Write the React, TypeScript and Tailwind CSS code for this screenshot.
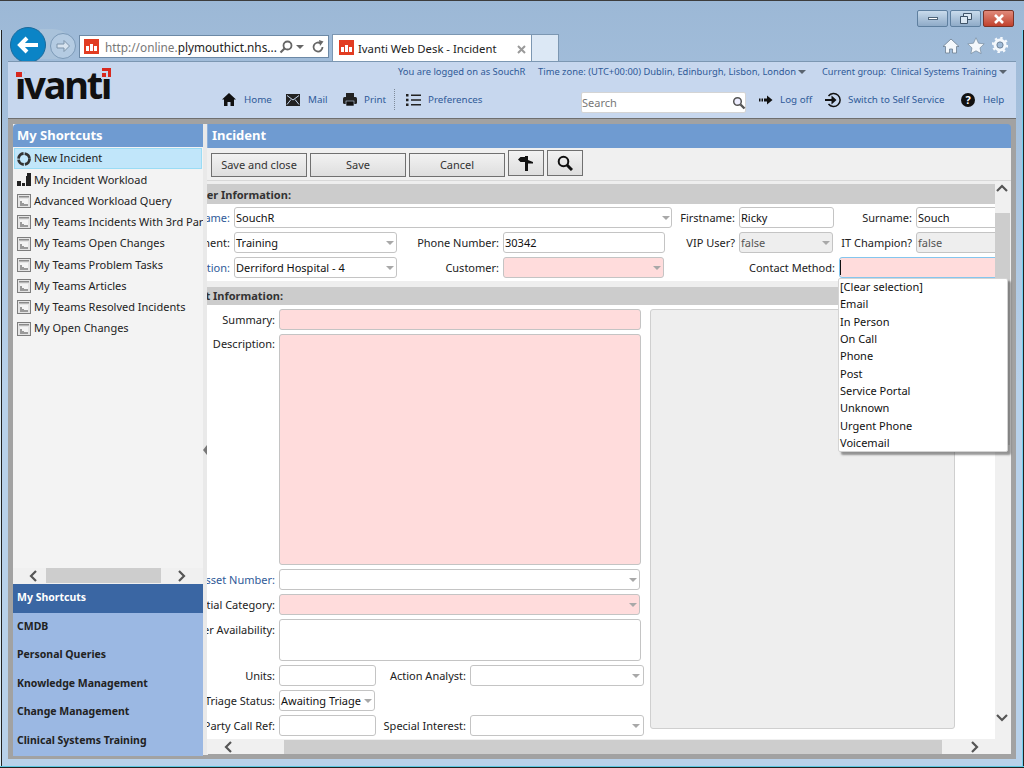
import React from "react";

type P = { className?: string; children?: React.ReactNode };

const Label = ({ className = "", children }: P) => (
  <div className={`absolute left-0 h-[20px] leading-[20px] text-right whitespace-nowrap text-[#222] ${className}`}>{children}</div>
);
const Input = ({ className = "", children }: P) => (
  <div className={`absolute h-[21px] leading-[19px] pl-[1px] whitespace-nowrap overflow-hidden rounded-[3px] border border-[#c4c4c4] text-[#111] ${className}`}>{children}</div>
);
const Tri = ({ className = "" }: P) => (
  <span className={`absolute top-[8px] w-0 h-0 border-l-[4px] border-r-[4px] border-t-[4px] border-l-transparent border-r-transparent border-t-[#a8a8a8] ${className}`} />
);

const ReportIcon = () => (
  <svg width="14" height="14" viewBox="0 0 14 14" className="shrink-0">
    <rect x="0.5" y="0.5" width="13" height="13" fill="#e4e4e4" stroke="#7d7d7d" />
    <rect x="2" y="2" width="10" height="1.5" fill="#8a8a8a" />
    <rect x="3" y="5" width="8" height="7" fill="#f4f4f4" />
    <path d="M3 12V7h2v2h2v1h4v2z" fill="#9a9a9a" />
  </svg>
);

const Favicon = ({ className = "" }: P) => (
  <span className={`absolute w-[15px] h-[15px] bg-[#e23c22] flex items-center justify-center ${className}`}>
    <svg width="11" height="8" viewBox="0 0 11 8"><path d="M0 3h3v5H0zM4 1h3v7H4zM8 3h3v5H8z" fill="#fff" /></svg>
  </span>
);

const Row = ({ children, icon }: { children: React.ReactNode; icon: React.ReactNode }) => (
  <div className="h-[21.25px] pl-[4px] flex items-center gap-[3px] whitespace-nowrap text-[#222]">
    <span className="w-[14px] h-[14px] flex items-center justify-center shrink-0">{icon}</span>
    <span>{children}</span>
  </div>
);

const Chevron = ({ dir, className = "" }: { dir: "l" | "r" | "u" | "d"; className?: string }) => {
  const d = { l: "M8 1 3 6l5 5", r: "M4 1l5 5-5 5", u: "M1 8l5-5 5 5", d: "M1 4l5 5 5-5" }[dir];
  return (
    <svg width="12" height="12" viewBox="0 0 12 12" className={`absolute ${className}`}>
      <path d={d} fill="none" stroke="#555" strokeWidth="2.2" />
    </svg>
  );
};

const Btn = ({ className = "", children }: P) => (
  <div className={`absolute flex items-center justify-center border border-[#707070] bg-gradient-to-b from-[#f2f2f2] to-[#dedede] text-[#333] ${className}`}>{children}</div>
);

const topLink = "absolute text-[9.4px] leading-[14px] whitespace-nowrap text-[#2f5a98]";
const link = "absolute text-[9.8px] leading-[14px] whitespace-nowrap text-[#2f5a98]";
const option = "h-[17.35px] leading-[15px]";

export default function App() {
  return (
    <div className="relative w-[1024px] h-[768px] overflow-hidden text-[11px] font-['Open_Sans','Noto_Sans',sans-serif] bg-gradient-to-b from-[#9cb8d6] via-[#b8d1ea] to-[#b8d1ea]">
      {/* window edges */}
      <div className="absolute left-0 top-0 w-full h-[1px] bg-[#3c3c3c]" />
      <div className="absolute left-0 top-[30px] w-[1px] h-[738px] bg-[#dcecf6]" />
      <div className="absolute left-[1px] top-[30px] w-[1px] h-[736px] bg-[#222]" />
      <div className="absolute left-[1022px] top-[30px] w-[1px] h-[736px] bg-[#6fd0f0]" />
      <div className="absolute left-[1023px] top-[30px] w-[1px] h-[738px] bg-[#222]" />
      <div className="absolute left-0 top-[766px] w-full h-[1px] bg-[#5cc6e0]" />
      <div className="absolute left-0 top-[767px] w-full h-[1px] bg-[#222]" />

      {/* window buttons */}
      <div className="absolute left-[917px] top-[10px] w-[31px] h-[17px] rounded-[2px] border border-[#5e7f9f] bg-gradient-to-b from-[#c9dbec] to-[#8fabc8] flex items-center justify-center">
        <span className="w-[10px] h-[3px] bg-white border border-[#50657a]" />
      </div>
      <div className="absolute left-[950px] top-[10px] w-[31px] h-[17px] rounded-[2px] border border-[#5e7f9f] bg-gradient-to-b from-[#c9dbec] to-[#8fabc8] flex items-center justify-center">
        <svg width="12" height="11" viewBox="0 0 12 11"><path d="M3.5 3V.5h8v6H8M.5 3.500h7v7h-7z" fill="#dbe7f2" stroke="#3f5368" /></svg>
      </div>
      <div className="absolute left-[983px] top-[10px] w-[31px] h-[17px] rounded-[2px] border border-[#7a3328] bg-gradient-to-b from-[#e0897a] to-[#c0402c] flex items-center justify-center">
        <svg width="12" height="10" viewBox="0 0 12 10"><path d="M2 1l8 8M10 1L2 9" stroke="#fff" strokeWidth="2.6" /></svg>
      </div>

      {/* nav buttons */}
      <div className="absolute left-[40px] top-[29px] w-[34px] h-[30px] bg-[#a9c2da] rounded-tr-[24px] rounded-br-[10px]" />
      <div className="absolute left-[50px] top-[33px] w-[26px] h-[26px] rounded-full border border-[#7c9ab8] bg-[#b4cbe2] flex items-center justify-center">
        <svg width="16" height="14" viewBox="0 0 16 14"><path d="M9 1.500 14.500 7 9 12.500V9H2V5h7z" fill="#d7e3ef" stroke="#7c93aa" /></svg>
      </div>
      <div className="absolute left-[10px] top-[27px] w-[36px] h-[36px] rounded-full bg-[#0b84c6] border border-[#1b6a9c] flex items-center justify-center">
        <svg width="22" height="18" viewBox="0 0 22 18"><path d="M10 2 3 9l7 7M3.500 9H21" fill="none" stroke="#fff" strokeWidth="4" /></svg>
      </div>

      {/* address bar */}
      <div className="absolute left-[79px] top-[35px] w-[250px] h-[23px] bg-white border border-[#6c89a6]">
        <Favicon className="left-[4px] top-[3px]" />
        <span className="absolute left-[25px] top-[2px] text-[11.8px] leading-[18px] whitespace-nowrap text-[#777]">
          http://online.<span className="text-[#222]">plymouthict.nhs...</span>
        </span>
        <svg width="14" height="14" viewBox="0 0 14 14" className="absolute left-[199px] top-[4px]">
          <circle cx="8.500" cy="5.500" r="4" fill="none" stroke="#666" strokeWidth="1.800" />
          <path d="M5.500 8.500 1.500 12.500" stroke="#666" strokeWidth="2.200" />
        </svg>
        <Tri className="left-[216px] !top-[9px] !border-t-[#666]" />
        <svg width="13" height="14" viewBox="0 0 13 14" className="absolute left-[232px] top-[4px]">
          <path d="M10.500 7a4.500 4.500 0 1 1-2-3.700" fill="none" stroke="#666" strokeWidth="1.800" />
          <path d="M7 0l4.500 1.500L8 6z" fill="#666" />
        </svg>
      </div>

      {/* tabs */}
      <div className="absolute left-[332px] top-[34px] w-[200px] h-[28px] bg-white border border-b-0 border-[#7c97b2]">
        <Favicon className="left-[6px] top-[5px]" />
        <span className="absolute left-[25px] top-[5px] text-[11.3px] leading-[18px] whitespace-nowrap text-[#222]">Ivanti Web Desk - Incident</span>
        <svg width="9" height="9" viewBox="0 0 9 9" className="absolute left-[184px] top-[10px]">
          <path d="M1 1l7 7M8 1L1 8" stroke="#9a9a9a" strokeWidth="2" />
        </svg>
      </div>
      <div className="absolute left-[532px] top-[34px] w-[27px] h-[28px] bg-[#dce8f5] border border-l-0 border-b-0 border-[#7c97b2]" />

      {/* browser icons */}
      <svg width="18" height="16" viewBox="0 0 18 16" className="absolute left-[942px] top-[38px]">
        <path d="M9 1 1 8.500h2.500V15h4v-4h3v4h4V8.500H17z" fill="#f4f8fc" stroke="#6d7f90" strokeWidth="0.800" />
      </svg>
      <svg width="18" height="17" viewBox="0 0 18 17" className="absolute left-[967px] top-[37px]">
        <path d="M9 .8l2.500 5.400 5.700.7-4.200 4 1.100 5.700L9 13.800l-5.100 2.800L5 10.900.8 6.900l5.700-.7z" fill="#f4f8fc" stroke="#6d7f90" strokeWidth="0.600" />
      </svg>
      <svg width="16" height="16" viewBox="0 0 16 16" className="absolute left-[992px] top-[37px]">
        <circle cx="8" cy="8" r="5" fill="none" stroke="#f4f8fc" strokeWidth="3" />
        <circle cx="8" cy="8" r="7" fill="none" stroke="#f4f8fc" strokeWidth="2.400" strokeDasharray="2.400 3.100" />
        <circle cx="8" cy="8" r="3" fill="none" stroke="#6d7f90" strokeWidth="0.800" />
      </svg>

      {/* page frame */}
      <div className="absolute left-[8px] top-[61px] w-[1008px] h-[698px] bg-[#a2a2a2]" />
      <div className="absolute left-[8px] top-[61px] w-[1008px] h-[1px] bg-[#7c97b2]" />

      {/* page header */}
      <div className="absolute left-[8px] top-[62px] w-[1008px] h-[57px] bg-[#c7d7ee] border-b border-[#6f6f6f]" />
      <div className="absolute left-[15px] top-[62px] text-[38px] leading-[44px] font-bold tracking-[-2.2px] text-[#111] font-['Liberation_Sans',sans-serif]">ivanti</div>
      <div className="absolute left-[14px] top-[67px] w-[10px] h-[12px] bg-[#c7d7ee]" />
      <div className="absolute left-[16px] top-[72px] w-[6px] h-[5px] bg-[#d8291f]" />
      <div className="absolute left-[101px] top-[66px] w-[11px] h-[13px] bg-[#c7d7ee]" />
      <div className="absolute left-[102px] top-[68px] w-[9px] h-[3px] bg-[#d8291f]" />
      <div className="absolute left-[108px] top-[68px] w-[3px] h-[9px] bg-[#d8291f]" />
      <div className="absolute left-[102px] top-[73px] w-[4px] h-[4px] bg-[#d8291f]" />

      <div className={`${topLink} left-[398px] top-[65px]`}>You are logged on as SouchR</div>
      <div className={`${topLink} left-[538px] top-[65px]`}>Time zone: (UTC+00:00) Dublin, Edinburgh, Lisbon, London</div>
      <Tri className="left-[798px] !top-[70px] !border-t-[#5a6470]" />
      <div className={`${topLink} !text-[9.2px] left-[822px] top-[65px]`}>Current group:&nbsp; Clinical Systems Training</div>
      <Tri className="left-[999px] !top-[70px] !border-t-[#5a6470]" />

      <svg width="14" height="13" viewBox="0 0 14 13" className="absolute left-[222px] top-[93px]"><path d="M7 0 0 6.500h2V13h3.500V9h3v4H12V6.500h2z" fill="#111" /></svg>
      <div className={`${link} left-[244px] top-[93px]`}>Home</div>
      <svg width="14" height="12" viewBox="0 0 14 12" className="absolute left-[286px] top-[94px]"><rect width="14" height="12" fill="#222" /><path d="M1 1.500 7 6l6-4.500M1 10.500l4-5M13 10.500l-4-5" fill="none" stroke="#c7d7ee" /></svg>
      <div className={`${link} left-[308px] top-[93px]`}>Mail</div>
      <svg width="14" height="13" viewBox="0 0 14 13" className="absolute left-[343px] top-[93px]"><path d="M3 0h8v4H3z" fill="#222" /><rect y="4" width="14" height="7" rx="1.500" fill="#222" /><rect x="3" y="8" width="8" height="5" fill="#111" stroke="#c7d7ee" strokeWidth=".6" /></svg>
      <div className={`${link} left-[364px] top-[93px]`}>Print</div>
      <div className="absolute left-[394px] top-[89px] h-[21px] border-l border-dotted border-[#7d8a99]" />
      <svg width="15" height="12" viewBox="0 0 15 12" className="absolute left-[406px] top-[94px]"><path d="M0 0h2.500v2.500H0zM0 4.700h2.500v2.500H0zM0 9.500h2.500V12H0zM5 .5h10v1.500H5zM5 5.200h10v1.500H5zM5 10h10v1.500H5z" fill="#222" /></svg>
      <div className={`${link} left-[428px] top-[93px]`}>Preferences</div>

      <div className="absolute left-[581px] top-[92px] w-[165px] h-[21px] bg-white border border-[#d4d4d4] rounded-[2px] text-[11px] leading-[20px] text-[#777]">Search
        <svg width="14" height="14" viewBox="0 0 14 14" className="absolute left-[150px] top-[3px]">
          <circle cx="5.500" cy="5.500" r="3.800" fill="#eef" stroke="#555" strokeWidth="1.500" />
          <path d="M8.500 8.500 12.500 12.500" stroke="#555" strokeWidth="2.400" />
        </svg>
      </div>

      <svg width="14" height="10" viewBox="0 0 14 10" className="absolute left-[759px] top-[95px]"><path d="M0 3.500h1.500v3H0zM2.500 3.500H4v3H2.500zM5 3.500h3V.5L13.500 5 8 9.500v-3H5z" fill="#111" /></svg>
      <div className={`${link} left-[780px] top-[93px]`}>Log off</div>
      <svg width="16" height="16" viewBox="0 0 16 16" className="absolute left-[825px] top-[92px]">
        <path d="M3.500 4A6.500 6.500 0 1 1 3.500 12" fill="none" stroke="#111" strokeWidth="1.500" />
        <path d="M0 7h6.500V3.500L11.500 8 6.500 12.500V9H0z" fill="#111" />
      </svg>
      <div className={`${link} left-[848px] top-[93px]`}>Switch to Self Service</div>
      <div className="absolute left-[961px] top-[93px] w-[14px] h-[14px] rounded-full bg-[#111] text-white text-[11px] leading-[14px] font-bold text-center font-['Liberation_Sans',sans-serif]">?</div>
      <div className={`${link} left-[983px] top-[93px]`}>Help</div>

      {/* left panel */}
      <div className="absolute left-[13px] top-[124px] w-[190px] h-[631px] flex flex-col bg-[#f3f3f3]">
        <div className="h-[23px] shrink-0 bg-[#6f9bd1] rounded-tl-[4px] pl-[4px] text-white font-bold text-[13px] leading-[23px]">My Shortcuts</div>
        <div className="relative h-[421px] shrink-0 overflow-hidden">
          <div className="absolute left-[1px] top-[1px] w-[188px] h-[21px] bg-[#c1e6fa] border border-[#9adcf5]" />
          <div className="relative pt-[1px]">
            <Row icon={
              <svg width="14" height="14" viewBox="0 0 14 14">
                <circle cx="7" cy="7" r="5.500" fill="none" stroke="#333" strokeWidth="2.800" strokeDasharray="7.500 1.150" />
              </svg>
            }>New Incident</Row>
            <Row icon={
              <svg width="14" height="13" viewBox="0 0 14 13"><path d="M0 8h4v5H0zM5 10h3v3H5zM9 3h1v10H9zM10 0h4v13h-4z" fill="#222" /></svg>
            }>My Incident Workload</Row>
            <Row icon={<ReportIcon />}>Advanced Workload Query</Row>
            <Row icon={<ReportIcon />}>My Teams Incidents With 3rd Party</Row>
            <Row icon={<ReportIcon />}>My Teams Open Changes</Row>
            <Row icon={<ReportIcon />}>My Teams Problem Tasks</Row>
            <Row icon={<ReportIcon />}>My Teams Articles</Row>
            <Row icon={<ReportIcon />}>My Teams Resolved Incidents</Row>
            <Row icon={<ReportIcon />}>My Open Changes</Row>
          </div>
        </div>
        <div className="relative h-[16px] shrink-0 bg-[#f0f0f0]">
          <div className="absolute left-[33px] top-0 w-[115px] h-[15px] bg-[#cdcdcd]" />
          <Chevron dir="l" className="left-[15px] top-[2px]" />
          <Chevron dir="r" className="left-[162px] top-[2px]" />
        </div>
        <div className="flex-1 flex flex-col bg-[#9bb8e3] font-bold text-[10.5px] text-[#222] whitespace-nowrap">
          <div className="h-[29px] bg-[#3a66a3] text-white pl-[4px] leading-[26px]">My Shortcuts</div>
          <div className="h-[28.5px] pl-[4px] leading-[26px]">CMDB</div>
          <div className="h-[28.5px] pl-[4px] leading-[25px]">Personal Queries</div>
          <div className="h-[28.5px] pl-[4px] leading-[26px]">Knowledge Management</div>
          <div className="h-[28.5px] pl-[4px] leading-[25px]">Change Management</div>
          <div className="h-[28.5px] pl-[4px] leading-[26px]">Clinical Systems Training</div>
        </div>
      </div>

      {/* splitter */}
      <div className="absolute left-[203px] top-[124px] w-[5px] h-[631px] bg-[#e9e9e9]" />
      <div className="absolute left-[203px] top-[445px] w-0 h-0 border-t-[5px] border-b-[5px] border-r-[4px] border-t-transparent border-b-transparent border-r-[#777]" />

      {/* main panel */}
      <div className="absolute left-[207px] top-[124px] w-[804px] h-[24px] bg-[#6f9bd1] rounded-tr-[4px] pl-[4px] text-white font-bold text-[13px] leading-[23px] border-l border-[#8fb0da]">Incident</div>
      <div className="absolute left-[207px] top-[148px] w-[804px] h-[33px] bg-[#f0f0f0] border-b border-[#d8d8d8]" />
      <Btn className="left-[211px] top-[153px] w-[96px] h-[24px]">Save and close</Btn>
      <Btn className="left-[310px] top-[153px] w-[96px] h-[24px]">Save</Btn>
      <Btn className="left-[409px] top-[153px] w-[96px] h-[24px]">Cancel</Btn>
      <Btn className="left-[508px] top-[150px] w-[36px] h-[26px]">
        <svg width="16" height="15" viewBox="0 0 16 15"><path d="M0 3.500 2.500 1H7V0h3v4l5 2v1.500H10V15H7V6H2.500z" fill="#111" /></svg>
      </Btn>
      <Btn className="left-[547px] top-[150px] w-[36px] h-[26px]">
        <svg width="16" height="16" viewBox="0 0 16 16"><circle cx="6.500" cy="6.500" r="4.800" fill="none" stroke="#111" strokeWidth="2" /><path d="M10 10l5 5" stroke="#111" strokeWidth="3" /></svg>
      </Btn>

      {/* form area */}
      <div className="absolute left-0 top-0 w-[995px] h-[739px] [clip-path:inset(181px_0_0_207px)]">
        <div className="absolute left-[207px] top-[181px] w-[788px] h-[558px] bg-white" />
        <div className="absolute left-[207px] top-[181px] w-[788px] h-[3px] bg-[#eeeeee]" />
        <div className="absolute left-[207px] top-[184px] w-[788px] h-[20px] bg-[#cccccc]" />
        <Label className="w-[291px] top-[185px] font-bold !text-[#333]">Customer Information:</Label>

        <Label className="w-[230px] top-[208px] !text-[#2f5a98]">Login Name:</Label>
        <Input className="left-[234px] top-[207px] w-[438px] bg-white">SouchR<Tri className="left-[427px]" /></Input>
        <Label className="w-[735px] top-[208px]">Firstname:</Label>
        <Input className="left-[739px] top-[207px] w-[95px] bg-white">Ricky</Input>
        <Label className="w-[912px] top-[208px]">Surname:</Label>
        <Input className="left-[916px] top-[207px] w-[100px] bg-white">Souch</Input>

        <Label className="w-[230px] top-[233px]">Department:</Label>
        <Input className="left-[234px] top-[232px] w-[163px] bg-white">Training<Tri className="left-[151px]" /></Input>
        <Label className="w-[499px] top-[233px]">Phone Number:</Label>
        <Input className="left-[503px] top-[232px] w-[162px] bg-white">30342</Input>
        <Label className="w-[735px] top-[233px]">VIP User?</Label>
        <Input className="left-[739px] top-[232px] w-[94px] bg-[#eeeeee] !text-[#555]">false<Tri className="left-[82px]" /></Input>
        <Label className="w-[912px] top-[233px]">IT Champion?</Label>
        <Input className="left-[916px] top-[232px] w-[100px] bg-[#eeeeee] !text-[#555]">false</Input>

        <Label className="w-[230px] top-[258px] !text-[#2f5a98]">Location:</Label>
        <Input className="left-[234px] top-[257px] w-[163px] bg-white">Derriford Hospital - 4<Tri className="left-[151px]" /></Input>
        <Label className="w-[499px] top-[258px]">Customer:</Label>
        <Input className="left-[503px] top-[257px] w-[161px] bg-[#ffdcdc]"><Tri className="left-[149px]" /></Input>
        <Label className="w-[835px] top-[258px]">Contact Method:</Label>
        <Input className="left-[839px] top-[257px] w-[170px] bg-[#ffdcdc] !border-[#84c6ee]"><span className="absolute left-[0px] top-[2px] w-[1px] h-[15px] bg-[#111]" /></Input>

        <div className="absolute left-[207px] top-[281px] w-[788px] h-[6px] bg-[#eeeeee]" />
        <div className="absolute left-[207px] top-[287px] w-[788px] h-[18px] bg-[#cccccc]" />
        <Label className="w-[283px] top-[286px] font-bold !text-[#333]">Incident Information:</Label>

        <Label className="w-[275px] top-[310px]">Summary:</Label>
        <Input className="left-[279px] top-[309px] w-[362px] bg-[#ffdcdc]" />
        <Label className="w-[275px] top-[334px]">Description:</Label>
        <Input className="left-[279px] top-[334px] w-[362px] !h-[231px] bg-[#ffdcdc]" />
        <Label className="w-[275px] top-[570px] !text-[#2f5a98]">Asset Number:</Label>
        <Input className="left-[279px] top-[569px] w-[361px] bg-white"><Tri className="left-[349px]" /></Input>
        <Label className="w-[275px] top-[595px]">Initial Category:</Label>
        <Input className="left-[279px] top-[594px] w-[361px] bg-[#ffdcdc]"><Tri className="left-[349px]" /></Input>
        <Label className="w-[275px] top-[620px]">Customer Availability:</Label>
        <Input className="left-[279px] top-[619px] w-[362px] !h-[42px] bg-white" />
        <Label className="w-[275px] top-[666px]">Units:</Label>
        <Input className="left-[279px] top-[665px] w-[97px] bg-white" />
        <Label className="w-[466px] top-[666px]">Action Analyst:</Label>
        <Input className="left-[470px] top-[665px] w-[174px] bg-white"><Tri className="left-[161px]" /></Input>
        <Label className="w-[275px] top-[691px]">Triage Status:</Label>
        <Input className="left-[279px] top-[690px] w-[96px] bg-white pr-[16px]">Awaiting Triage<Tri className="left-[84px]" /></Input>
        <Label className="w-[275px] top-[716px]">3rd Party Call Ref:</Label>
        <Input className="left-[279px] top-[715px] w-[97px] bg-white" />
        <Label className="w-[466px] top-[716px]">Special Interest:</Label>
        <Input className="left-[470px] top-[715px] w-[174px] bg-white"><Tri className="left-[161px]" /></Input>

        <div className="absolute left-[650px] top-[309px] w-[305px] h-[420px] bg-[#eeeeee] border border-[#cfcfcf] rounded-[3px]" />
      </div>

      {/* scrollbars */}
      <div className="absolute left-[995px] top-[181px] w-[16px] h-[558px] bg-[#f0f0f0]">
        <div className="absolute left-0 top-[32px] w-[15px] h-[232px] bg-[#cdcdcd]" />
        <Chevron dir="u" className="left-[1px] top-[2px]" />
        <Chevron dir="d" className="left-[1px] top-[530px]" />
      </div>
      <div className="absolute left-[207px] top-[739px] w-[804px] h-[15px] bg-[#f0f0f0]">
        <div className="absolute left-[77px] top-[1px] w-[658px] h-[14px] bg-[#cdcdcd]" />
        <Chevron dir="l" className="left-[16px] top-[2px]" />
        <Chevron dir="r" className="left-[761px] top-[2px]" />
      </div>

      {/* dropdown */}
      <div className="absolute left-[838px] top-[278px] w-[170px] h-[174px] bg-white border border-[#d4d4d4] rounded-[2px] pl-[1px] shadow-[3px_3px_2px_rgba(70,70,70,0.55)] text-[#111]">
        <div className={option}>[Clear selection]</div>
        <div className={option}>Email</div>
        <div className={option}>In Person</div>
        <div className={option}>On Call</div>
        <div className={option}>Phone</div>
        <div className={option}>Post</div>
        <div className={option}>Service Portal</div>
        <div className={option}>Unknown</div>
        <div className={option}>Urgent Phone</div>
        <div className={option}>Voicemail</div>
      </div>
    </div>
  );
}
